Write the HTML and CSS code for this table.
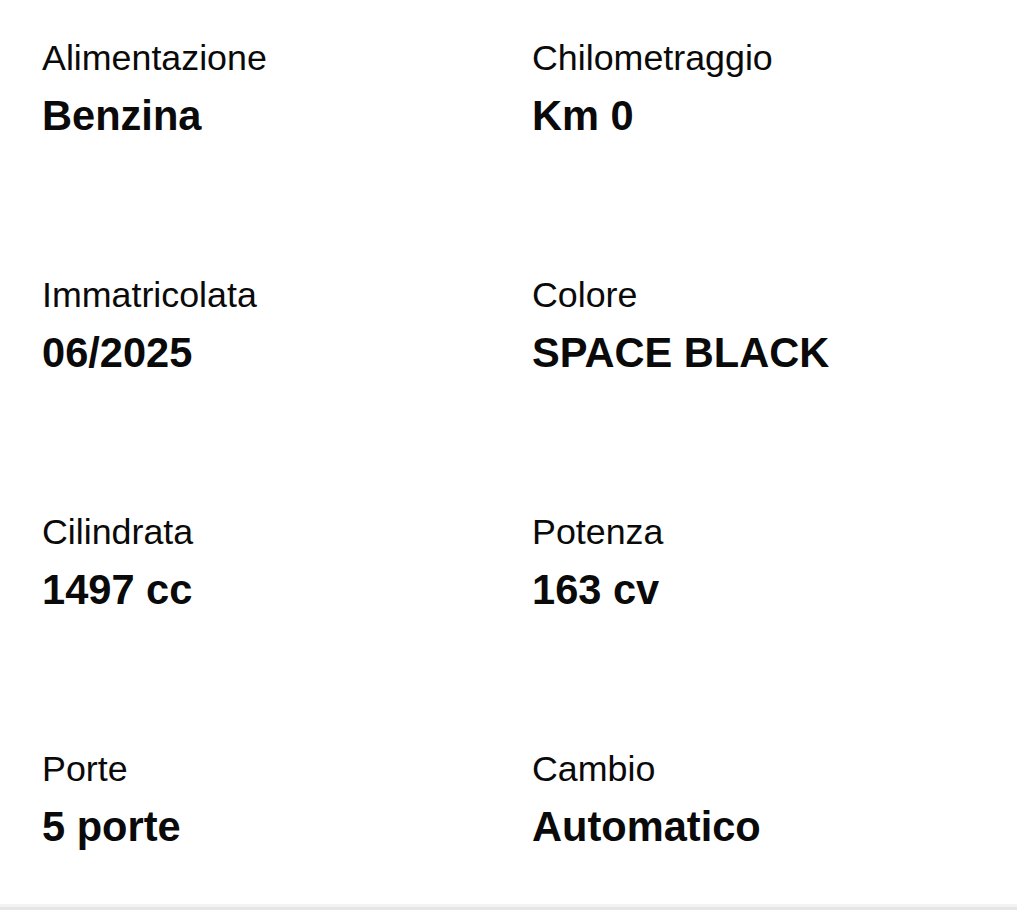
FILE: index.html
```html
<!DOCTYPE html>
<html lang="it">
<head>
<meta charset="utf-8">
<title>Dettagli veicolo</title>
<link rel="stylesheet" href="styles.css">
</head>
<body>
<section class="specs">
  <div class="spec"><div class="label">Alimentazione</div><div class="value">Benzina</div></div>
  <div class="spec"><div class="label">Chilometraggio</div><div class="value">Km 0</div></div>
  <div class="spec"><div class="label">Immatricolata</div><div class="value">06/2025</div></div>
  <div class="spec"><div class="label">Colore</div><div class="value">SPACE BLACK</div></div>
  <div class="spec"><div class="label">Cilindrata</div><div class="value">1497 cc</div></div>
  <div class="spec"><div class="label">Potenza</div><div class="value">163 cv</div></div>
  <div class="spec"><div class="label">Porte</div><div class="value">5 porte</div></div>
  <div class="spec"><div class="label">Cambio</div><div class="value">Automatico</div></div>
</section>
<div class="divider"></div>
</body>
</html>
```
FILE: styles.css
```css
html, body {
  margin: 0;
  padding: 0;
  background: #ffffff;
}
body {
  font-family: "Liberation Sans", Arial, Helvetica, sans-serif;
  color: #0a0a0a;
}
.specs {
  display: grid;
  grid-template-columns: 490px 1fr;
  row-gap: 133px;
  padding: 37px 0 52px 42px;
}
.spec {
  display: flex;
  flex-direction: column;
  gap: 12px;
}
.label {
  font-size: 35.8px;
  line-height: 42px;
  font-weight: 400;
}
.value {
  font-size: 41.6px;
  line-height: 50px;
  font-weight: 700;
}
.divider {
  border-top: 3px solid #f3f3f3;
  border-bottom: 3px solid #e6e6e6;
}
```
